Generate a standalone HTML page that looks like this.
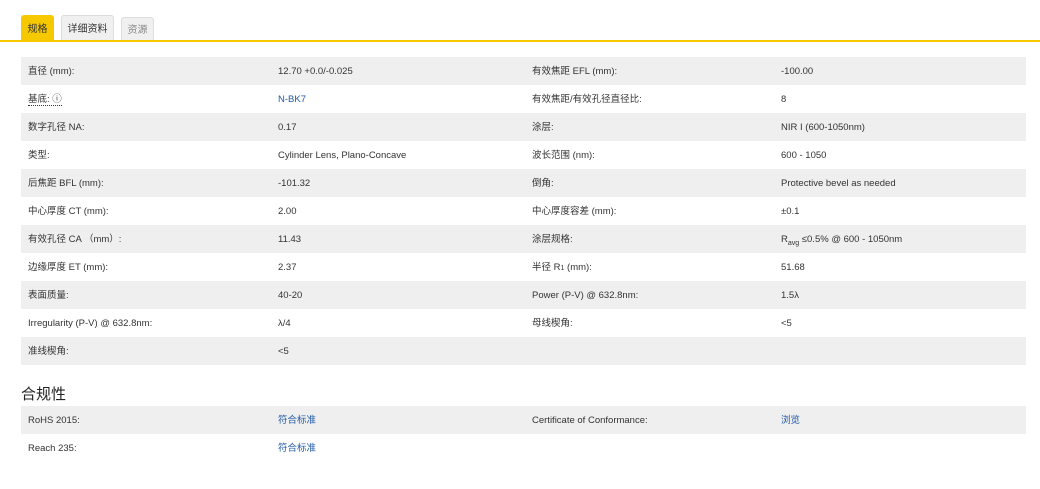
<!DOCTYPE html>
<html><head><meta charset="utf-8"><style>
body{margin:0;background:#fff;width:1040px;height:489px;overflow:hidden;font-family:"Liberation Sans","Noto Sans CJK SC",sans-serif;color:#333;font-size:9.5px}
.tabs{position:absolute;left:0;top:0;width:1040px;height:42px;border-bottom:2px solid #f5c800;box-sizing:border-box}
.tab{position:absolute;box-sizing:border-box;font-size:10px;text-align:center;border:1px solid #ddd;border-bottom:none;border-radius:3px 3px 0 0;background:#f0f0f0}
.t{position:absolute;left:21px;width:1005px}
.r{height:28px;display:flex;overflow:hidden}
.r:nth-child(odd){background:#efefef}
.r>div{height:28px;line-height:30px;white-space:nowrap;overflow:hidden}
.a{padding-left:7px;width:250px}
.b{width:254px}
.c{width:249px}
.l{color:#1f5aa6}
sub,.s{font-size:7px;line-height:0}
h2{position:absolute;left:21px;top:383px;margin:0;font-size:15px;font-weight:normal;color:#222}
</style></head><body>
<div class="tabs">
<div class="tab" style="left:21px;top:15px;width:33px;height:25px;background:#f5c800;border-color:#f5c800;line-height:27px">规格</div>
<div class="tab" style="left:61px;top:15px;width:53px;height:25px;line-height:27px">详细资料</div>
<div class="tab" style="left:121px;top:17px;width:33px;height:23px;line-height:26px;color:#888">资源</div>
</div>
<div class="t" style="top:57px">
<div class="r"><div class="a">直径 (mm):</div><div class="b">12.70 +0.0/-0.025</div><div class="c">有效焦距 EFL (mm):</div><div>-100.00</div></div>
<div class="r"><div class="a"><span style="border-bottom:1px dotted #333;line-height:12px">基底: ⓘ</span></div><div class="b"><span class="l">N-BK7</span></div><div class="c">有效焦距/有效孔径直径比:</div><div>8</div></div>
<div class="r"><div class="a">数字孔径 NA:</div><div class="b">0.17</div><div class="c">涂层:</div><div>NIR I (600-1050nm)</div></div>
<div class="r"><div class="a">类型:</div><div class="b">Cylinder Lens, Plano-Concave</div><div class="c">波长范围 (nm):</div><div>600 - 1050</div></div>
<div class="r"><div class="a">后焦距 BFL (mm):</div><div class="b">-101.32</div><div class="c">倒角:</div><div>Protective bevel as needed</div></div>
<div class="r"><div class="a">中心厚度 CT (mm):</div><div class="b">2.00</div><div class="c">中心厚度容差 (mm):</div><div>±0.1</div></div>
<div class="r"><div class="a">有效孔径 CA （mm）:</div><div class="b">11.43</div><div class="c">涂层规格:</div><div>R<sub>avg</sub> ≤0.5% @ 600 - 1050nm</div></div>
<div class="r"><div class="a">边缘厚度 ET (mm):</div><div class="b">2.37</div><div class="c">半径 R<span class="s">1</span> (mm):</div><div>51.68</div></div>
<div class="r"><div class="a">表面质量:</div><div class="b">40-20</div><div class="c">Power (P-V) @ 632.8nm:</div><div>1.5λ</div></div>
<div class="r"><div class="a">Irregularity (P-V) @ 632.8nm:</div><div class="b">λ/4</div><div class="c">母线楔角:</div><div>&lt;5</div></div>
<div class="r"><div class="a">准线楔角:</div><div class="b">&lt;5</div><div class="c"></div><div></div></div>
</div>
<h2>合规性</h2>
<div class="t" style="top:406px">
<div class="r"><div class="a">RoHS 2015:</div><div class="b"><span class="l">符合标准</span></div><div class="c">Certificate of Conformance:</div><div><span class="l">浏览</span></div></div>
<div class="r"><div class="a">Reach 235:</div><div class="b"><span class="l">符合标准</span></div><div class="c"></div><div></div></div>
</div>
</body></html>
